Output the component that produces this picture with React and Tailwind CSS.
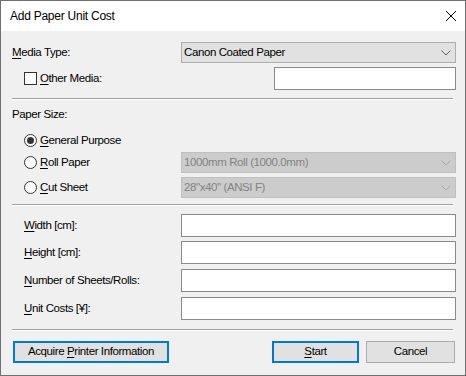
import React from "react";

const U = ({ children }) => <span className="underline underline-offset-[2px]">{children}</span>;

const Chevron = ({ disabled }) => (
  <svg width="10" height="6" viewBox="0 0 10 6" className="shrink-0">
    <path d="M0.5 0.5 L5 5 L9.5 0.5" fill="none" stroke={disabled ? "#a8a8a8" : "#606060"} strokeWidth="1" />
  </svg>
);

const Combo = ({ text, disabled }) => (
  <div
    className={`flex-1 h-[21px] flex items-center justify-between border pl-[2px] pr-[4px] ${
      disabled ? "bg-[#cccccc] border-[#bfbfbf] text-[#838383]" : "bg-[#e1e1e1] border-[#adadad] text-black"
    }`}
  >
    <span>{text}</span>
    <Chevron disabled={disabled} />
  </div>
);

const Field = ({ className = "" }) => <div className={`bg-white border border-[#8a8a8a] h-[23px] ${className}`} />;

const Separator = ({ className = "" }) => (
  <div className={`h-[2px] mr-[3px] border-t border-[#a0a0a0] border-b border-b-white ${className}`} />
);

const Radio = ({ checked }) => (
  <span className="w-[13px] h-[13px] rounded-full border border-[#333333] bg-white flex items-center justify-center shrink-0">
    {checked && <span className="w-[7px] h-[7px] rounded-full bg-[#333333]" />}
  </span>
);

const Button = ({ children, primary, className = "" }) => (
  <div
    className={`h-[22px] flex items-center justify-center bg-[#e1e1e1] ${
      primary ? "border-2 border-[#0078d7]" : "border border-[#adadad]"
    } ${className}`}
  >
    {children}
  </div>
);

export default function App() {
  return (
    <div className="w-[466px] h-[376px] border border-[#707070] bg-[#f0f0f0] flex flex-col text-[11.5px] tracking-[-0.4px] text-black font-['Liberation_Sans',Arial,sans-serif] leading-none">
      {/* title bar */}
      <div className="h-[30px] bg-white flex items-center justify-between pl-[9px] pr-[9px]">
        <span className="text-[12px] tracking-[-0.25px]">Add Paper Unit Cost</span>
        <svg width="10" height="10" viewBox="0 0 10 10">
          <path d="M0 0 L10 10 M10 0 L0 10" stroke="#000" strokeWidth="1" />
        </svg>
      </div>

      <div className="flex-1 flex flex-col pl-[11px] pr-[9px] pt-[11px]">
        <div className="flex items-center h-[21px]">
          <div className="w-[169px]">
            <U>M</U>edia Type:
          </div>
          <Combo text="Canon Coated Paper" />
        </div>

        <div className="flex items-center h-[23px] mt-[4px]">
          <div className="flex items-center gap-[3px] pl-[12px]">
            <span className="w-[13px] h-[13px] border border-[#333333] bg-white shrink-0" />
            <span>
              <U>O</U>ther Media:
            </span>
          </div>
          <Field className="ml-auto w-[182px]" />
        </div>

        <Separator className="mt-[8px]" />

        <div className="h-[18px] flex items-center mt-[6px]">Paper Size:</div>

        <div className="flex items-center h-[21px] mt-[6px] pl-[12px] gap-[3px]">
          <Radio checked />
          <span>
            <U>G</U>eneral Purpose
          </span>
        </div>

        <div className="flex items-center h-[21px] mt-[1px]">
          <div className="w-[169px] flex items-center gap-[3px] pl-[12px]">
            <Radio />
            <span>
              <U>R</U>oll Paper
            </span>
          </div>
          <Combo text="1000mm Roll (1000.0mm)" disabled />
        </div>

        <div className="flex items-center h-[21px] mt-[4px]">
          <div className="w-[169px] flex items-center gap-[3px] pl-[12px]">
            <Radio />
            <span>
              <U>C</U>ut Sheet
            </span>
          </div>
          <Combo text={'28"x40" (ANSI F)'} disabled />
        </div>

        <Separator className="mt-[6px]" />

        {[
          ["W", "idth [cm]:", "mt-[8px]"],
          ["H", "eight [cm]:", "mt-[4px]"],
          ["N", "umber of Sheets/Rolls:", "mt-[5px]"],
          ["U", "nit Costs [¥]:", "mt-[5px]"],
        ].map(([key, rest, mt]) => (
          <div key={key} className={`flex items-center h-[23px] ${mt}`}>
            <div className="w-[169px] pl-[12px]">
              <U>{key}</U>
              {rest}
            </div>
            <Field className="flex-1" />
          </div>
        ))}

        <Separator className="mt-[9px]" />

        <div className="flex items-center mt-[10px]">
          <Button primary className="w-[156px] ml-[1px]">
            Acquire&nbsp;<U>P</U>rinter Information
          </Button>
          <Button primary className="w-[87px] ml-auto">
            <U>S</U>tart
          </Button>
          <Button className="w-[89px] ml-[7px] mr-[1px]">Cancel</Button>
        </div>
      </div>
    </div>
  );
}
